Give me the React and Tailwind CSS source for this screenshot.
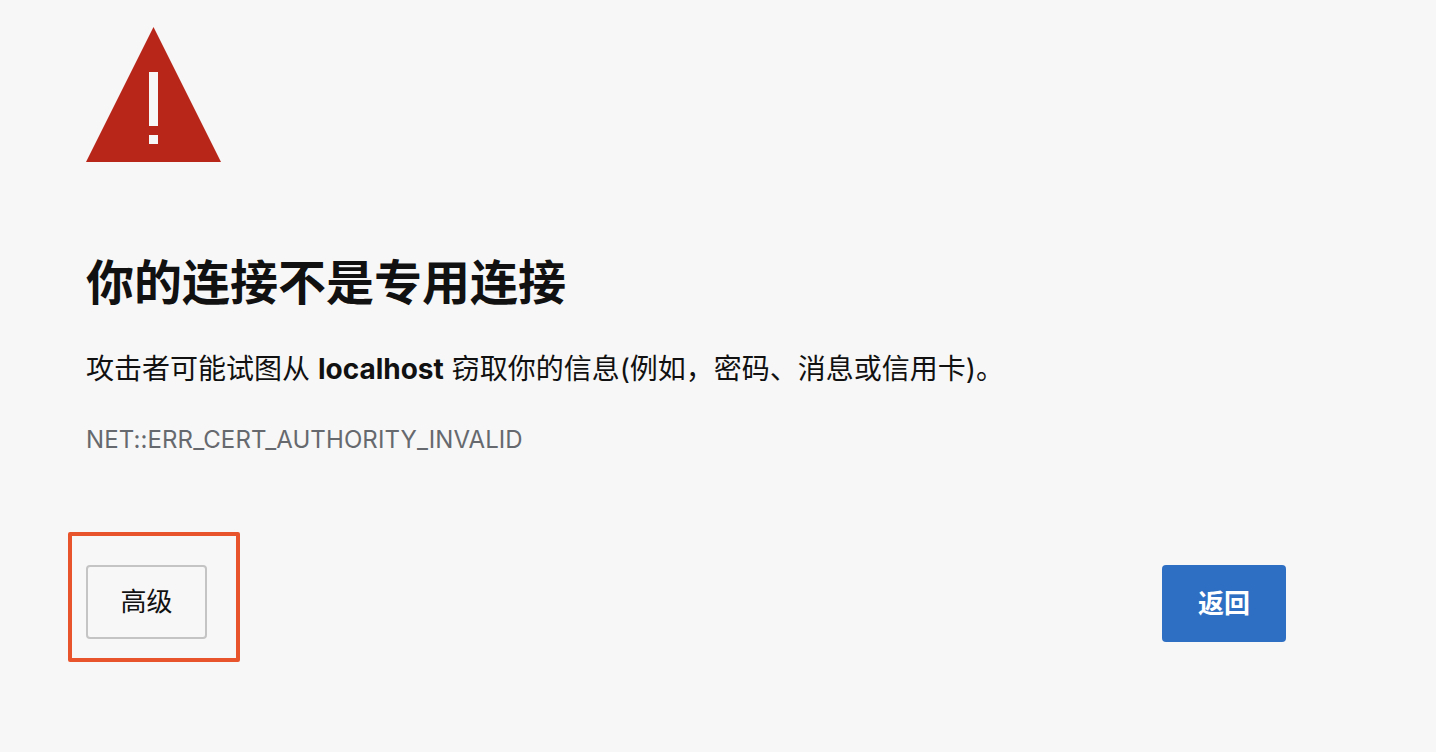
export default function App() {
  const cjk = 'font-["Inter","Noto_Sans_CJK_SC",sans-serif]';
  return (
    <div className={`w-[1436px] h-[752px] overflow-hidden bg-[#f7f7f7] pl-[86px] pr-[150px] pt-[27px] flex flex-col ${cjk}`}>
      <svg width="135" height="135" viewBox="0 0 135 135" className="block shrink-0">
        <polygon points="67.5,0 135,135 0,135" fill="#b8261a" />
        <rect x="63" y="45" width="9" height="54" fill="#f7f7f7" />
        <rect x="63" y="108" width="9" height="9" fill="#f7f7f7" />
      </svg>
      <h1 className="mt-[89px] text-[48px] leading-[64px] font-bold text-[#111111]">你的连接不是专用连接</h1>
      <p className="mt-[34px] text-[28px] leading-[40px] text-[#111111] whitespace-nowrap">
        攻击者可能试图从 <strong className="font-bold">localhost</strong> 窃取你的信息(例如，密码、消息或信用卡)。
      </p>
      <p className="mt-[35px] text-[24px] leading-[32px] tracking-[0.1px] text-[#66696e]">NET::ERR_CERT_AUTHORITY_INVALID</p>
      <div className="mt-[109px] flex items-start justify-between">
        <div className="relative">
          <button className="block w-[121px] h-[74px] pb-[2px] rounded-[4px] border-2 border-[#c4c4c4] bg-[#f7f7f7] text-[26px] text-[#111111]">高级</button>
          <div className="absolute left-[-18px] top-[-33px] w-[172px] h-[130px] rounded-[2px] border-[4px] border-[#e8552d]" />
        </div>
        <button className="block w-[124px] h-[77px] rounded-[4px] bg-[#2f6fc3] text-[26px] font-bold text-white">返回</button>
      </div>
    </div>
  );
}
